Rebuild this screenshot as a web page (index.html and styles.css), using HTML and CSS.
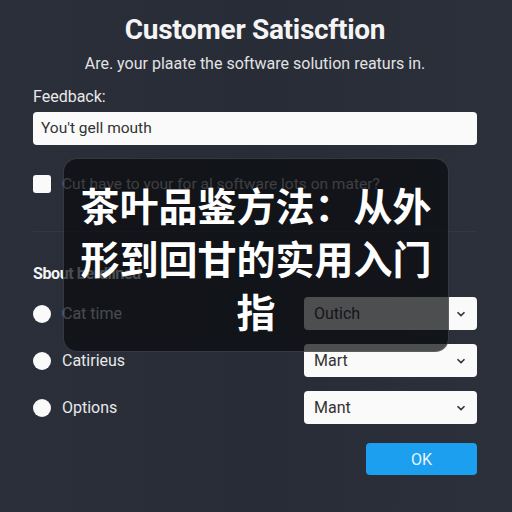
FILE: index.html
```html
<!DOCTYPE html>
<html lang="en">
<head>
    <meta charset="UTF-8">
    <title>Customer Satisfaction</title>
    <link rel="stylesheet" href="styles.css">
</head>
<body>

    <div class="page">
        <h1 class="title">Customer Satiscftion</h1>
        <p class="subtitle">Are. your plaate the software solution reaturs in.</p>

        <label class="label">Feedback:</label>
        <div class="input">You't gell mouth</div>

        <div class="check-row">
            <span class="checkbox"></span>
            <span class="check-text">Cut have to your for al software lots on mater?</span>
        </div>

        <div class="divider"></div>

        <h2 class="section">Sbout berdlined</h2>

        <div class="option-row">
            <span class="radio"></span>
            <span class="option-text">Cat time</span>
            <div class="select">Outich
                <svg class="chev" width="10" height="6" viewBox="0 0 10 6"><path d="M1.5 1.2 L5 4.6 L8.5 1.2" fill="none" stroke="#333" stroke-width="1.6"/></svg>
            </div>
        </div>
        <div class="option-row">
            <span class="radio"></span>
            <span class="option-text">Catirieus</span>
            <div class="select">Mart
                <svg class="chev" width="10" height="6" viewBox="0 0 10 6"><path d="M1.5 1.2 L5 4.6 L8.5 1.2" fill="none" stroke="#333" stroke-width="1.6"/></svg>
            </div>
        </div>
        <div class="option-row">
            <span class="radio"></span>
            <span class="option-text">Options</span>
            <div class="select">Mant
                <svg class="chev" width="10" height="6" viewBox="0 0 10 6"><path d="M1.5 1.2 L5 4.6 L8.5 1.2" fill="none" stroke="#333" stroke-width="1.6"/></svg>
            </div>
        </div>

        <div class="actions">
            <button class="ok">OK</button>
        </div>

        <div class="overlay">茶叶品鉴方法：从外形到回甘的实用入门指</div>
    </div>

</body>
</html>
```

FILE: styles.css
```css
body{
    margin: 0;
    font-family: Roboto, "Noto Sans", "Noto Sans CJK SC", sans-serif;
    background-color: #262b36;
}
.page{
    position: relative;
    width: 512px;
    height: 512px;
    box-sizing: border-box;
    padding: 13px 35px 0 33px;
    background: linear-gradient(90deg, #2a2f3a 0%, #272c37 50%, #2b303b 100%);
    color: #f2f2f2;
}
.title{
    margin: 0;
    text-align: center;
    font-size: 28px;
    font-weight: 700;
    line-height: 34px;
    color: #f4f4f4;
    letter-spacing: -0.3px;
}
.subtitle{
    margin: 7px 0 0 0;
    text-align: center;
    font-size: 16px;
    line-height: 20px;
    color: #e2e2e2;
}
.label{
    display: block;
    margin-top: 13px;
    font-size: 16px;
    line-height: 20px;
    color: #e8e8e8;
}
.input{
    margin-top: 5px;
    height: 33px;
    box-sizing: border-box;
    padding: 0 8px;
    background: #fafafa;
    border-radius: 4px;
    color: #333;
    font-size: 15.5px;
    line-height: 33px;
}
.check-row{
    display: flex;
    align-items: center;
    gap: 11px;
    margin-top: 30px;
    height: 18px;
}
.checkbox{
    width: 18px;
    height: 18px;
    background: #fafafa;
    border-radius: 3px;
}
.check-text{
    font-size: 15.5px;
    color: #c4c4c4;
}
.divider{
    margin-top: 38px;
    height: 1px;
    background: #323744;
}
.section{
    margin: 32px 0 0 0;
    font-size: 16px;
    font-weight: 700;
    line-height: 20px;
    color: #f4f4f4;
    letter-spacing: -0.4px;
}
.option-row{
    display: flex;
    align-items: center;
    gap: 11px;
    height: 33px;
    margin-top: 13px;
}
.option-row + .option-row{
    margin-top: 14px;
}
.radio{
    width: 18px;
    height: 18px;
    border-radius: 50%;
    background: #fafafa;
}
.option-text{
    flex: 1;
    font-size: 16px;
    color: #e8e8e8;
}
.select{
    display: flex;
    align-items: center;
    justify-content: space-between;
    width: 173px;
    height: 33px;
    box-sizing: border-box;
    padding: 0 11px 0 10px;
    background: #fafafa;
    border-radius: 4px;
    color: #333;
    font-size: 16px;
}
.actions{
    display: flex;
    justify-content: flex-end;
    margin-top: 19px;
}
.ok{
    width: 111px;
    height: 32px;
    border: none;
    border-radius: 4px;
    background: #1d9ff0;
    color: #e8f5ff;
    font-family: Roboto, sans-serif;
    font-size: 16px;
}
.overlay{
    position: absolute;
    left: 63px;
    top: 158px;
    width: 386px;
    height: 194px;
    box-sizing: border-box;
    padding: 19px 16px 0 16px;
    border: 1px solid rgba(120, 125, 135, 0.35);
    border-radius: 14px;
    background: rgba(10, 11, 14, 0.72);
    color: #ffffff;
    text-align: center;
    font-family: "Noto Sans CJK SC", sans-serif;
    font-size: 39px;
    font-weight: 700;
    line-height: 53px;
}
```
